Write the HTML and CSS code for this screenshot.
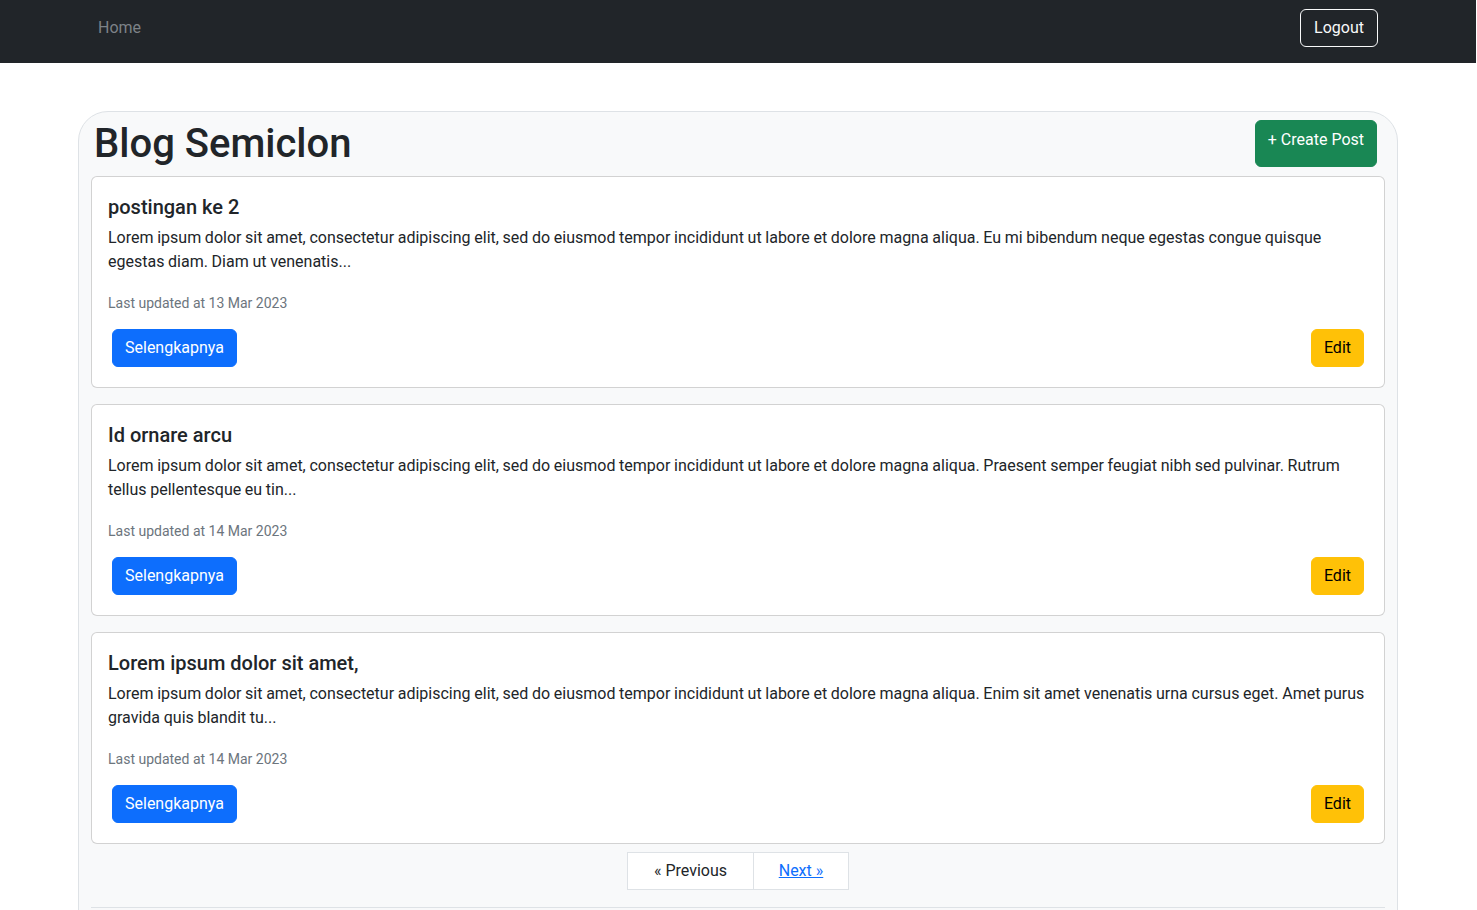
FILE: index.html
```html
<!DOCTYPE html>
<html lang="id">
<head>
<meta charset="utf-8">
<title>Blog Semiclon</title>
<link rel="stylesheet" href="styles.css">
</head>
<body>
<nav class="navbar">
  <div class="nav-inner">
    <a class="nav-link" href="#">Home</a>
    <button class="btn btn-outline-light">Logout</button>
  </div>
</nav>

<main class="panel">
  <header class="panel-head">
    <h1 class="title">Blog Semiclon</h1>
    <button class="btn btn-success btn-create">+ Create Post</button>
  </header>

  <section class="post-list">
    <article class="card">
      <h5 class="card-title">postingan ke 2</h5>
      <p class="card-text">Lorem ipsum dolor sit amet, consectetur adipiscing elit, sed do eiusmod tempor incididunt ut labore et dolore magna aliqua. Eu mi bibendum neque egestas congue quisque egestas diam. Diam ut venenatis...</p>
      <p class="card-meta"><small>Last updated at 13 Mar 2023</small></p>
      <div class="card-actions">
        <button class="btn btn-primary">Selengkapnya</button>
        <button class="btn btn-warning">Edit</button>
      </div>
    </article>

    <article class="card">
      <h5 class="card-title">Id ornare arcu</h5>
      <p class="card-text">Lorem ipsum dolor sit amet, consectetur adipiscing elit, sed do eiusmod tempor incididunt ut labore et dolore magna aliqua. Praesent semper feugiat nibh sed pulvinar. Rutrum tellus pellentesque eu tin...</p>
      <p class="card-meta"><small>Last updated at 14 Mar 2023</small></p>
      <div class="card-actions">
        <button class="btn btn-primary">Selengkapnya</button>
        <button class="btn btn-warning">Edit</button>
      </div>
    </article>

    <article class="card">
      <h5 class="card-title">Lorem ipsum dolor sit amet,</h5>
      <p class="card-text">Lorem ipsum dolor sit amet, consectetur adipiscing elit, sed do eiusmod tempor incididunt ut labore et dolore magna aliqua. Enim sit amet venenatis urna cursus eget. Amet purus gravida quis blandit tu...</p>
      <p class="card-meta"><small>Last updated at 14 Mar 2023</small></p>
      <div class="card-actions">
        <button class="btn btn-primary">Selengkapnya</button>
        <button class="btn btn-warning">Edit</button>
      </div>
    </article>
  </section>

  <nav class="pager">
    <span class="page-item page-prev">&laquo; Previous</span>
    <a class="page-item page-next" href="#">Next &raquo;</a>
  </nav>

  <hr class="divider">
</main>
</body>
</html>
```
FILE: styles.css
```css
* { box-sizing: border-box; }

html, body {
  margin: 0;
  background: #fff;
  font-family: Roboto, "Liberation Sans", sans-serif;
  font-size: 16px;
  line-height: 1.5;
  color: #212529;
}

body {
  overflow: hidden;
  height: 910px;
  padding-right: 1px;
}

.navbar {
  background: #212529;
  height: 63px;
  padding-top: 8px;
}

.nav-inner {
  width: 1320px;
  margin: 0 auto;
  padding: 0 20px 0 12px;
  display: flex;
  justify-content: space-between;
  align-items: center;
}

.nav-link {
  padding: 8px;
  color: #7d8287;
  text-decoration: none;
  line-height: 24px;
}

.btn {
  font-family: inherit;
  font-size: 16px;
  line-height: 24px;
  padding: 6px 12px;
  border: 1px solid transparent;
  border-radius: 6px;
  cursor: pointer;
}

.btn-outline-light {
  background: transparent;
  color: #f8f9fa;
  border-color: #f8f9fa;
  padding: 6px 13px;
}

.btn-success {
  background: #198754;
  border-color: #198754;
  color: #fff;
}

.btn-primary {
  background: #0d6efd;
  border-color: #0d6efd;
  color: #fff;
  margin: 4px;
}

.btn-warning {
  background: #ffc107;
  border-color: #ffc107;
  color: #000;
  margin: 4px;
}

.panel {
  width: 1320px;
  margin: 48px auto 0;
  min-height: 900px;
  background: #f8f9fa;
  border: 1px solid #dee2e6;
  border-radius: 30px 30px 0 0;
  padding: 8px 12px 0;
}

.panel-head {
  display: flex;
  justify-content: space-between;
  align-items: center;
  height: 48px;
  margin-bottom: 8px;
}

.title {
  margin: 0;
  padding-left: 3px;
  font-size: 40px;
  font-weight: 500;
  line-height: 48px;
}

.btn-create {
  align-self: flex-start;
  height: 47px;
  padding: 7px 12px 14px;
  margin-right: 8px;
}

.post-list {
  display: flex;
  flex-direction: column;
  gap: 16px;
}

.card {
  background: #fff;
  border: 1px solid rgba(0, 0, 0, 0.175);
  border-radius: 6px;
  padding: 17px 16px 16px;
}

.card-title {
  margin: 1px 0 7px;
  font-size: 20px;
  font-weight: 500;
  line-height: 24px;
}

.card-text {
  margin: 0 0 17px;
  word-spacing: -0.3px;
}

.card-meta {
  margin: 0 0 10px;
  line-height: 24px;
}

.card-meta small {
  font-size: 14px;
  color: #6c757d;
}

.card-actions {
  display: flex;
  justify-content: space-between;
  align-items: center;
}

.pager {
  display: flex;
  justify-content: center;
  margin-top: 8px;
}

.page-item {
  display: block;
  padding: 6px 0;
  line-height: 24px;
  text-align: center;
  background: #fff;
  border: 1px solid #dee2e6;
}

.page-prev {
  width: 127px;
  color: #212529;
}

.page-next {
  width: 96px;
  margin-left: -1px;
  color: #0d6efd;
  text-decoration: underline;
}

.divider {
  margin: 17px 0 0;
  border: 0;
  border-top: 1px solid #dee2e6;
}
```
